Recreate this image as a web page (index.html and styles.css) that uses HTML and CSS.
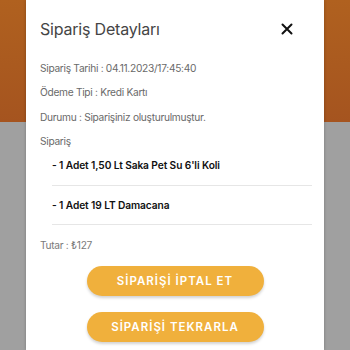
FILE: index.html
```html
<!DOCTYPE html>
<html lang="tr">
<head>
<meta charset="utf-8">
<link rel="stylesheet" href="styles.css">
</head>
<body>
<div class="screen">
  <div class="modal">
    <div class="header">
      <h1 class="title">Sipariş Detayları</h1>
      <svg class="close" width="12" height="12" viewBox="0 0 12 12"><path d="M1.5 1.5L10.5 10.5M10.5 1.5L1.5 10.5" stroke="#111" stroke-width="2" stroke-linecap="round"/></svg>
    </div>
    <p class="meta">Sipariş Tarihi : 04.11.2023/17:45:40</p>
    <p class="meta">Ödeme Tipi : Kredi Kartı</p>
    <p class="meta">Durumu : Siparişiniz oluşturulmuştur.</p>
    <p class="meta">Sipariş</p>
    <ul class="items">
      <li class="item">- 1 Adet 1,50 Lt Saka Pet Su 6'li Koli</li>
      <li class="item">- 1 Adet 19 LT Damacana</li>
    </ul>
    <p class="meta total">Tutar : ₺127</p>
    <div class="actions">
      <button class="btn">SİPARİŞİ İPTAL ET</button>
      <button class="btn">SİPARİŞİ TEKRARLA</button>
    </div>
  </div>
</div>
</body>
</html>
```
FILE: styles.css
```css
* { box-sizing: border-box; }
html, body { margin: 0; padding: 0; }
body {
  width: 350px;
  height: 350px;
  overflow: hidden;
  font-family: Inter, "Open Sans", sans-serif;
}
.screen {
  height: 350px;
  padding: 0 26px;
  background: linear-gradient(to bottom, #b0611f 0, #a5541f 122px, #a0a0a0 122px, #a0a0a0 100%);
}
.modal {
  background: #fff;
  height: 350px;
  padding: 0 12px 0 14px;
  box-shadow: 0 0 3px rgba(0,0,0,0.25);
}
.header {
  display: flex;
  align-items: center;
  justify-content: space-between;
  height: 56px;
  padding-top: 2px;
  padding-right: 19px;
}
.title {
  margin: 0;
  font-size: 16px;
  font-weight: 400;
  color: #454545;
  letter-spacing: -0.2px;
}
.meta {
  margin: 0;
  height: 24.3px;
  display: flex;
  align-items: center;
  font-size: 10.2px;
  letter-spacing: -0.3px;
  color: #6a6a6a;
}
.items {
  list-style: none;
  margin: -7px 0 0;
  padding: 0 0 0 12px;
}
.item {
  height: 39.5px;
  display: flex;
  align-items: center;
  font-size: 10.2px;
  letter-spacing: -0.1px;
  font-weight: 600;
  color: #111;
  border-bottom: 1px solid #e6e6e6;
}
.total {
  margin-top: 8px;
  color: #7a7a7a;
}
.actions {
  display: flex;
  flex-direction: column;
  align-items: center;
  gap: 16px;
  margin-top: 9px;
  padding-right: 2px;
}
.btn {
  width: 177px;
  height: 30px;
  border: none;
  border-radius: 15px;
  background: #f0b03c;
  color: #fff;
  font-family: inherit;
  font-size: 11.5px;
  font-weight: 600;
  letter-spacing: 1px;
  box-shadow: 0 2px 3px rgba(0,0,0,0.18);
}
```
